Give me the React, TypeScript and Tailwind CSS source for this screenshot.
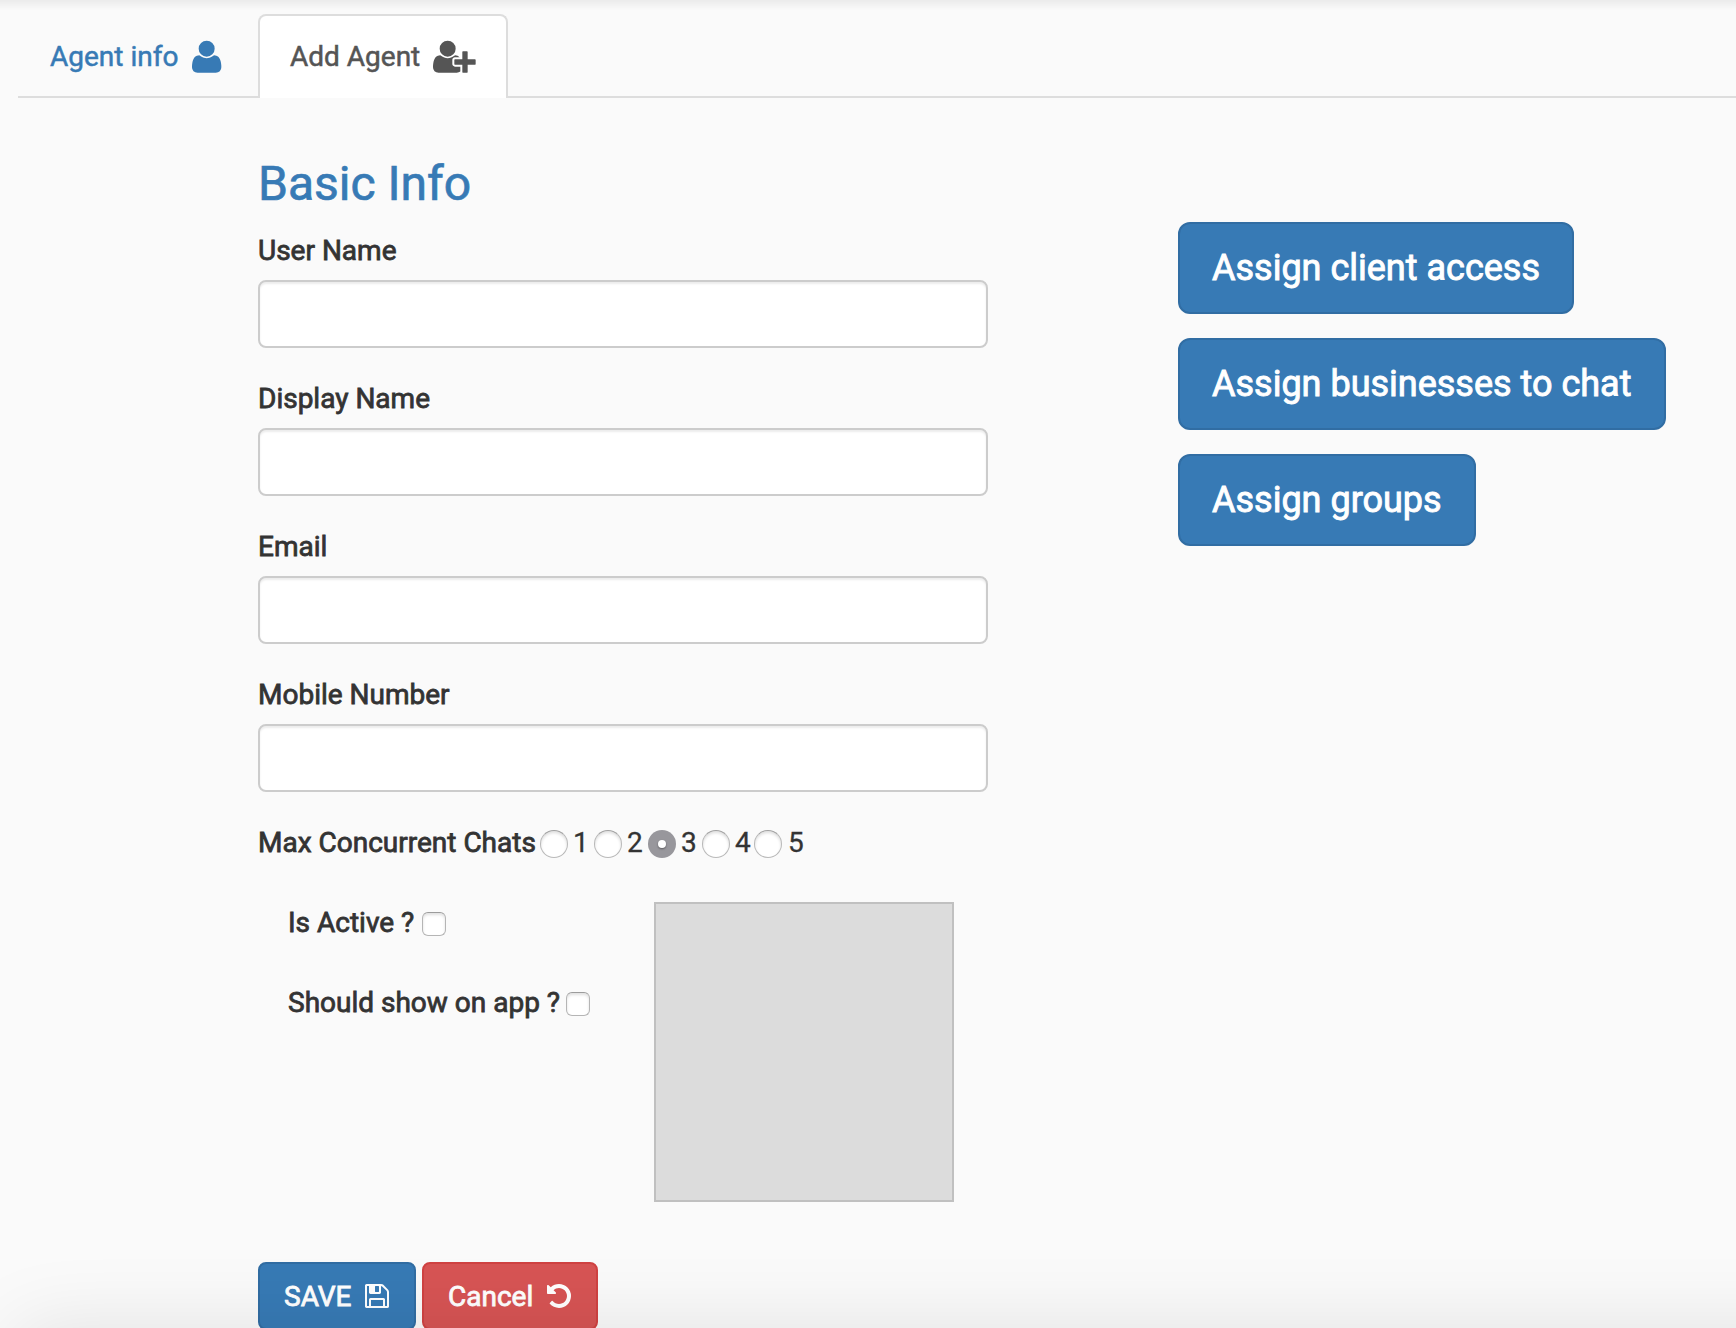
import React from "react";

const USER =
  "M1600 1405q0 120-73 189.5t-194 69.5h-874q-121 0-194-69.5t-73-189.5q0-53 3.5-103.5t14-109 26.5-108.5 43-97.5 62-81 85.5-53.5 111.5-20q9 0 42 21.5t74.5 48 108 48 133.5 21.5 133.5-21.5 108-48 74.5-48 42-21.5q61 0 111.5 20t85.5 53.5 62 81 43 97.5 26.5 108.5 14 109 3.5 103.5zm-320-893q0 159-112.5 271.5t-271.5 112.5-271.5-112.5-112.5-271.5 112.5-271.5 271.5-112.5 271.5 112.5 112.5 271.5z";
const USER_PLUS =
  "M704 896q-159 0-271.5-112.5t-112.5-271.5 112.5-271.5 271.5-112.5 271.5 112.5 112.5 271.5-112.5 271.5-271.5 112.5zm960 128h352q13 0 22.5 9.5t9.5 22.5v192q0 13-9.5 22.5t-22.5 9.5h-352v352q0 13-9.5 22.5t-22.5 9.5h-192q-13 0-22.5-9.5t-9.5-22.5v-352h-352q-13 0-22.5-9.5t-9.5-22.5v-192q0-13 9.5-22.5t22.5-9.5h352v-352q0-13 9.5-22.5t22.5-9.5h192q13 0 22.5 9.5t9.5 22.5v352zm-736 224q0 52 38 90t90 38h256v238q-68 50-171 50h-874q-121 0-194-69t-73-190q0-53 3.5-103.5t14-109 26.5-108.5 43-97.5 62-81 85.5-53.5 111.5-20q19 0 39 17 79 61 154.5 91.5t164.5 30.5 164.5-30.5 154.5-91.5q20-17 39-17 132 0 217 96h-223q-52 0-90 38t-38 90v192z";
const FLOPPY =
  "M512 1536h768v-384h-768v384zm896 0h128v-896q0-14-10-38.5t-20-34.5l-281-281q-10-10-34-20t-39-10v416q0 40-28 68t-68 28h-576q-40 0-68-28t-28-68v-416h-128v1280h128v-416q0-40 28-68t68-28h832q40 0 68 28t28 68v416zm-384-928v-320q0-13-9.5-22.5t-22.5-9.5h-192q-13 0-22.5 9.5t-9.5 22.5v320q0 13 9.5 22.5t22.5 9.5h192q13 0 22.5-9.5t9.5-22.5zm640 32v928q0 40-28 68t-68 28h-1344q-40 0-68-28t-28-68v-1344q0-40 28-68t68-28h928q40 0 88 20t76 48l280 280q28 28 48 76t20 88z";
const UNDO =
  "M1664 896q0 156-61 298t-164 245-245 164-298 61q-172 0-327-72.5t-264-204.5q-7-10-6.5-22.5t8.5-20.5l137-138q10-9 25-9 16 2 23 12 73 95 179 147t225 52q104 0 198.5-40.5t163.5-109.5 109.5-163.5 40.5-198.5-40.5-198.5-109.5-163.5-163.5-109.5-198.5-40.5q-98 0-188 35.5t-160 101.5l137 138q31 30 14 69-17 40-59 40h-448q-26 0-45-19t-19-45v-448q0-42 40-59 39-17 69 14l130 129q107-101 244.5-156.5t284.5-55.5q156 0 298 61t245 164 164 245 61 298z";

function Icon({ d, width = 1792, className }: { d: string; width?: number; className: string }) {
  return (
    <svg viewBox={`0 0 ${width} 1792`} fill="currentColor" className={`shrink-0 ${className}`} aria-hidden="true">
      <path d={d} />
    </svg>
  );
}

function Field({ label }: { label: string }) {
  return (
    <label className="mb-[30px] block">
      <span className="mb-[10px] block h-10 pt-px [-webkit-text-stroke:0.8px_#333]">{label}</span>
      <input
        type="text"
        className="block h-[68px] w-full rounded-lg border-2 border-[#ccc] bg-white px-6 shadow-[inset_0_2px_2px_rgba(0,0,0,0.075)] outline-none"
      />
    </label>
  );
}

function Radio({
  value,
  checked,
  className,
  gap = "ml-[5px]",
}: {
  value: number;
  checked?: boolean;
  className: string;
  gap?: string;
}) {
  return (
    <label className={`flex shrink-0 items-center ${className}`}>
      <input type="radio" name="chats" defaultChecked={checked} className="sr-only" />
      {checked ? (
        <span className="mt-1 flex size-7 items-center justify-center rounded-full bg-[#98979c]">
          <span className="size-2 rounded-full bg-white shadow-[0_1px_2px_rgba(0,0,0,0.4)]" />
        </span>
      ) : (
        <span className="mt-1 size-7 rounded-full border border-[#b9b9b9] border-t-[#a0a0a0] bg-white shadow-[inset_0_2px_3px_rgba(0,0,0,0.13)]" />
      )}
      <span className={`pt-0.5 [-webkit-text-stroke:0.3px_#333] ${gap}`}>{value}</span>
    </label>
  );
}

function Check({ label, gap }: { label: string; gap: string }) {
  return (
    <label className="flex h-10 items-center">
      <span className="pt-0.5 whitespace-nowrap [-webkit-text-stroke:0.8px_#333]">{label}</span>
      <input
        type="checkbox"
        className={`mt-1 size-6 appearance-none rounded-[6px] border border-[#b5b5b5] border-t-[#9c9c9c] bg-white shadow-[inset_0_2px_3px_rgba(0,0,0,0.12)] ${gap}`}
      />
    </label>
  );
}

function Assign({ children, className }: { children: React.ReactNode; className: string }) {
  return (
    <button
      className={`h-[92px] rounded-xl border-2 border-[#316da3] bg-[#377ab5] pl-8 text-left text-[36px] leading-[48px] whitespace-nowrap text-white [-webkit-text-stroke:0.9px_#fff] ${className}`}
    >
      {children}
    </button>
  );
}

export default function App() {
  return (
    <div className="relative h-[1328px] w-[1736px] overflow-hidden bg-[#fafafa] pl-[18px] font-['Roboto',sans-serif] text-[28px] leading-10 text-[#333]">
      <nav className="flex h-[98px] border-b-2 border-[#ddd] pt-[14px]">
        <a className="mr-1 flex h-[84px] w-[236px] items-center pt-[2px] pl-8 text-[#377ab5] [-webkit-text-stroke:0.5px_#377ab5]">
          <span className="w-[138px] whitespace-nowrap">Agent info</span>
          <Icon d={USER} className="size-[37.33px]" />
        </a>
        <a className="flex h-[84px] w-[250px] items-center rounded-t-lg border-2 border-b-0 border-[#ddd] bg-white pl-[30px] text-[#555] [-webkit-text-stroke:0.5px_#555]">
          <span className="w-[143px] whitespace-nowrap">Add Agent</span>
          <Icon d={USER_PLUS} width={2048} className="h-[37.33px] w-[42.67px]" />
        </a>
      </nav>

      <main className="flex pt-[59px] pl-[240px]">
        <form className="w-[730px]">
          <h3 className="mb-5 h-[53px] text-[48px] leading-[53px] text-[#377ab5] [-webkit-text-stroke:0.7px_#377ab5]">
            Basic Info
          </h3>
          <Field label="User Name" />
          <Field label="Display Name" />
          <Field label="Email" />
          <Field label="Mobile Number" />

          <div className="flex h-10 items-center">
            <span className="w-[282px] shrink-0 pt-0.5 whitespace-nowrap [-webkit-text-stroke:0.8px_#333]">
              Max Concurrent Chats
            </span>
            <Radio value={1} className="w-[54px]" />
            <Radio value={2} className="w-[54px]" />
            <Radio value={3} checked className="w-[54px]" />
            <Radio value={4} className="w-[52px]" />
            <Radio value={5} className="w-[54px]" gap="ml-[6px]" />
          </div>

          <div className="mt-10 flex pl-[30px]">
            <div className="flex w-[366px] flex-col gap-10">
              <Check label="Is Active ?" gap="ml-2" />
              <Check label="Should show on app ?" gap="ml-[6px]" />
            </div>
            <div className="size-[300px] border-2 border-[#c0c0c0] bg-[#dcdcdc]" />
          </div>

          <div className="mt-[60px] flex gap-[6px] text-white [-webkit-text-stroke:0.8px_#fff]">
            <button
              type="button"
              className="flex h-[68px] w-[158px] items-center rounded-lg border-2 border-[#316da3] bg-[#377ab5] pl-6 text-left"
            >
              <span className="w-[79px] pt-px">SAVE</span>
              <Icon d={FLOPPY} className="size-7" />
            </button>
            <button
              type="button"
              className="flex h-[68px] w-[176px] items-center rounded-lg border-2 border-[#d04242] bg-[#d75454] pl-6 text-left"
            >
              <span className="w-[97px] pt-px">Cancel</span>
              <Icon d={UNDO} className="size-7" />
            </button>
          </div>
        </form>

        <aside className="ml-[190px] flex flex-col items-start gap-6 pt-[65px]">
          <Assign className="w-[396px]">Assign client access</Assign>
          <Assign className="w-[488px]">Assign businesses to chat</Assign>
          <Assign className="w-[298px]">Assign groups</Assign>
        </aside>
      </main>

      <div className="pointer-events-none absolute inset-x-0 top-0 h-[10px] bg-linear-to-b from-black/6 to-transparent" />
      <div className="pointer-events-none absolute top-full right-[-100px] left-[16px] h-[200px] rounded-xl shadow-[0_0_80px_rgba(0,0,0,0.1)]" />
    </div>
  );
}
